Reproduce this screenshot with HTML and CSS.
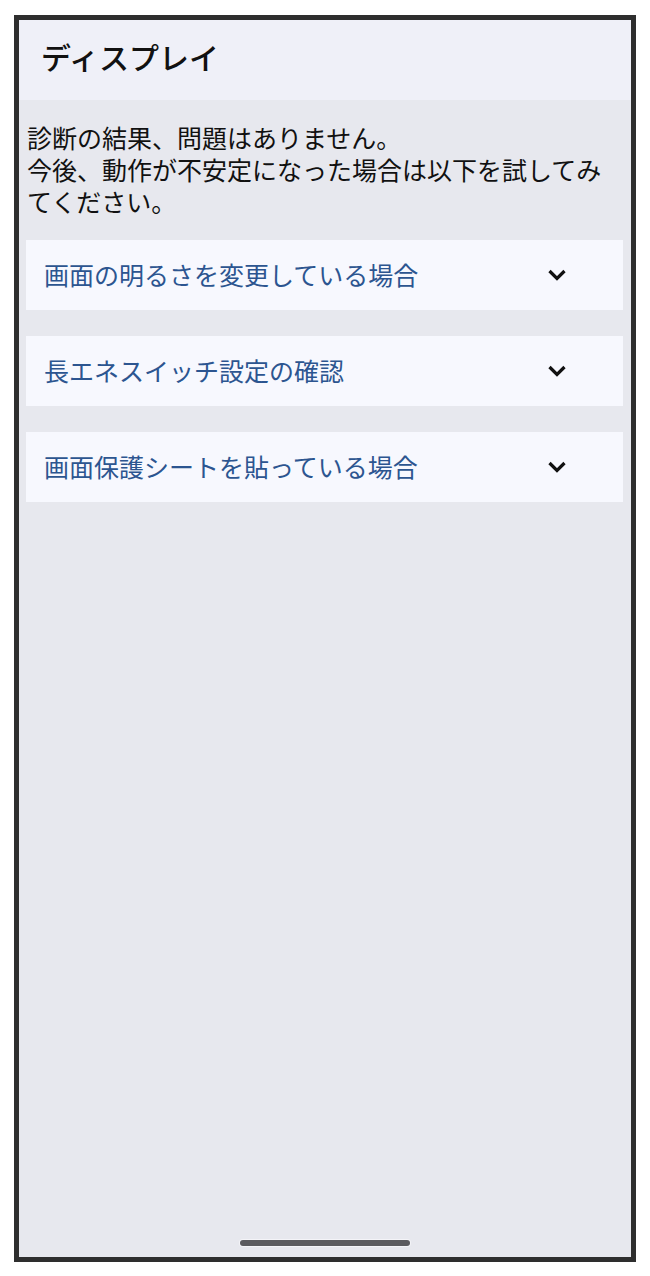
FILE: index.html
```html
<!DOCTYPE html>
<html lang="ja">
<head>
<meta charset="utf-8">
<title>ディスプレイ</title>
<link rel="stylesheet" href="styles.css">
</head>
<body>
<div class="frame">
  <header class="header">
    <h1 class="title">ディスプレイ</h1>
  </header>
  <main class="content">
    <p class="message">診断の結果、問題はありません。<br>今後、動作が不安定になった場合は以下を試してみてください。</p>
    <div class="list">
      <div class="item">
        <span class="item-label">画面の明るさを変更している場合</span>
        <svg class="chevron" width="20" height="14" viewBox="0 0 20 14"><path d="M2.5 3 L10 10.5 L17.5 3" fill="none" stroke="#111" stroke-width="3.2"/></svg>
      </div>
      <div class="item">
        <span class="item-label">長エネスイッチ設定の確認</span>
        <svg class="chevron" width="20" height="14" viewBox="0 0 20 14"><path d="M2.5 3 L10 10.5 L17.5 3" fill="none" stroke="#111" stroke-width="3.2"/></svg>
      </div>
      <div class="item">
        <span class="item-label">画面保護シートを貼っている場合</span>
        <svg class="chevron" width="20" height="14" viewBox="0 0 20 14"><path d="M2.5 3 L10 10.5 L17.5 3" fill="none" stroke="#111" stroke-width="3.2"/></svg>
      </div>
    </div>
  </main>
  <div class="home-indicator"></div>
</div>
</body>
</html>
```
FILE: styles.css
```css
html, body {
  margin: 0;
  padding: 0;
  background: #ffffff;
}
body {
  font-family: "Noto Sans CJK JP", "Noto Sans", sans-serif;
}
.frame {
  box-sizing: border-box;
  width: 622px;
  height: 1247px;
  margin: 15px 0 0 14px;
  border: 5px solid #2e2e2e;
  background: #e7e8ee;
  display: flex;
  flex-direction: column;
}
.header {
  height: 80px;
  flex: none;
  background: #eff0f8;
  display: flex;
  align-items: center;
  padding-left: 22px;
}
.title {
  margin: 0;
  font-size: 30px;
  font-weight: 500;
  color: #111;
  line-height: 1;
  position: relative;
  top: -4px;
}
.content {
  padding: 21px 8px 0 8px;
}
.message {
  margin: 0;
  font-size: 25px;
  line-height: 32px;
  color: #111;
}
.list {
  margin-top: 23px;
  display: flex;
  flex-direction: column;
  gap: 26px;
}
.item {
  height: 70px;
  margin: 0 0 0 -1px;
  background: #f7f8fe;
  display: flex;
  align-items: center;
  justify-content: space-between;
  padding: 0 56px 0 18px;
}
.item-label {
  font-size: 25px;
  color: #2c5590;
  line-height: 1;
  position: relative;
  top: -1px;
}
.chevron {
  display: block;
  flex: none;
}
.home-indicator {
  margin: auto auto 11px auto;
  width: 170px;
  height: 6px;
  border-radius: 3px;
  background: #5b5b5f;
  box-shadow: 0 0 0 1px #f4f4f8;
}
```
